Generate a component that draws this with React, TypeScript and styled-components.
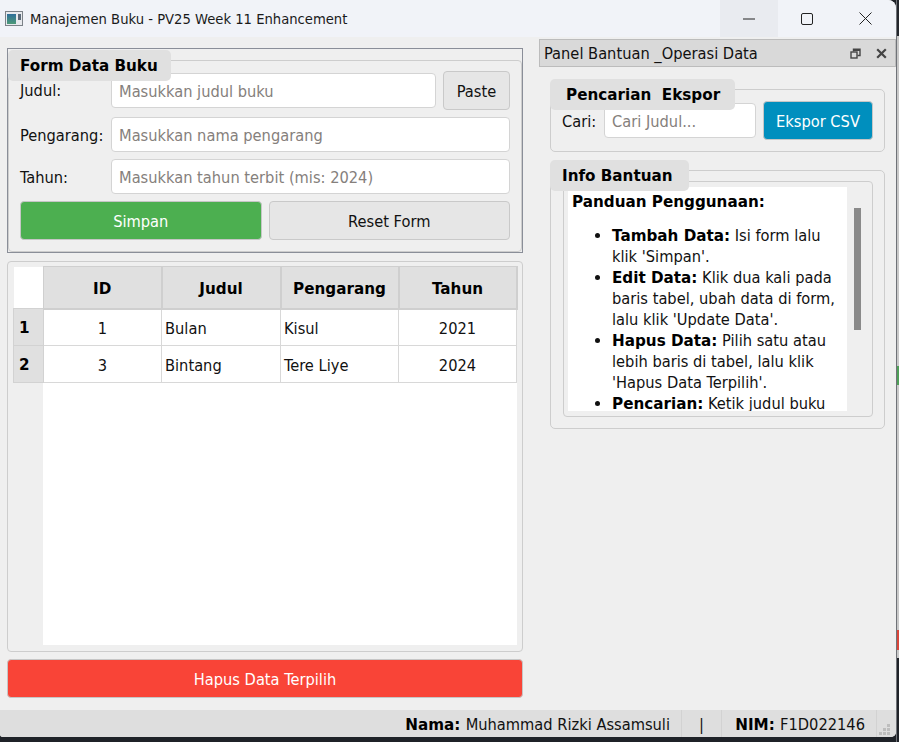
import styled, { createGlobalStyle } from "styled-components"

const GlobalStyle = createGlobalStyle`
  html, body {
    margin: 0;
    padding: 0;
    height: 100%;
    background: #1f2228;
    overflow: hidden;
  }
  * {
    box-sizing: border-box;
  }
  #root {
    height: 100%;
  }
`

const uiFont = `"DejaVu Sans Condensed", "DejaVu Sans", sans-serif`
const boldFont = `"DejaVu Sans", "Noto Sans", sans-serif`

const Desktop = styled.div`
  width: 899px;
  height: 742px;
  display: flex;
  font-family: ${uiFont};
  font-stretch: condensed;
  font-size: 16.3px;
  color: #111;
`

const Window = styled.div`
  width: 896px;
  height: 737px;
  flex: none;
  display: flex;
  flex-direction: column;
  background: #efefef;
  border-radius: 0 8px 5px 3px;
  overflow: hidden;
`

// the bit of the window behind this one that peeks out on the right
const BehindStrip = styled.div`
  width: 3px;
  flex: none;
  display: flex;
  flex-direction: column;
  border-left: 1px solid #6f7278;
`

const BehindPart = styled.div<{ $height: number; $color: string }>`
  height: ${(p) => p.$height}px;
  background: ${(p) => p.$color};
`

const TitleBar = styled.div`
  height: 37px;
  flex: none;
  display: flex;
  align-items: center;
  background: #f1f3f8;
  padding: 0 2px 0 5px;
`

const AppTitle = styled.span`
  margin-left: 7px;
  font-size: 14.65px;
  color: #1a1a1a;
  flex: 1;
`

const WinButton = styled.div<{ $hover?: boolean }>`
  width: 58px;
  height: 37px;
  display: flex;
  align-items: center;
  justify-content: center;
  background: ${(p) => (p.$hover ? "#e9ebf0" : "transparent")};
`

const Body = styled.div`
  flex: 1;
  display: flex;
  min-height: 0;
`

const LeftColumn = styled.div`
  width: 516px;
  margin-left: 7px;
  padding: 11px 0 12px;
  display: flex;
  flex-direction: column;
`

const FormFrame = styled.section`
  position: relative;
  height: 205px;
  border: 1px solid #8a8e98;
  padding-top: 11px;
  display: flex;
`

const FormGroup = styled.div`
  flex: 1;
  border: 1px solid #cdcdcd;
  border-radius: 4px;
  padding: 10px 11px 11px;
  display: grid;
  grid-template-columns: 91px 1fr;
  grid-template-rows: 39px 35px 35px 39px;
  row-gap: 7px;
  align-items: center;
`

const Legend = styled.div<{ $left: number; $top: number; $width: number; $pad: number }>`
  position: absolute;
  left: ${(p) => p.$left}px;
  top: ${(p) => p.$top}px;
  width: ${(p) => p.$width}px;
  height: 31px;
  padding: 6px 0 0 ${(p) => p.$pad}px;
  background: #e0e0e0;
  border-radius: 5px;
  font-family: ${boldFont};
  font-stretch: normal;
  font-weight: 700;
  font-size: 15.2px;
  line-height: 20px;
  color: #000;
  white-space: pre;
`

const FieldLabel = styled.label<{ $raise?: number }>`
  color: #111;
  margin-top: ${(p) => (p.$raise ? -p.$raise : 1)}px;
`

const TextField = styled.input`
  width: 100%;
  height: 35px;
  background: #fff;
  border: 1px solid #d4d4d4;
  border-radius: 4px;
  padding: 2px 7px 0;
  font-family: ${uiFont};
  font-stretch: condensed;
  font-size: 16.3px;
  outline: none;
  &::placeholder {
    color: #85807c;
    opacity: 1;
  }
`

const FirstRow = styled.div`
  display: flex;
  align-items: center;
  gap: 7px;
`

const ActionRow = styled.div`
  grid-column: 1 / 3;
  display: grid;
  grid-template-columns: 1fr 1fr;
  gap: 7px;
  height: 39px;
`

const Button = styled.button<{ $bg?: string; $fg?: string; $width?: number }>`
  height: 39px;
  width: ${(p) => (p.$width ? `${p.$width}px` : "100%")};
  flex: none;
  background: ${(p) => p.$bg ?? "#e6e6e6"};
  color: ${(p) => p.$fg ?? "#111"};
  border: 1px solid ${(p) => (p.$bg ? "#c6c6c6" : "#c9c9c9")};
  border-radius: 4px;
  font-family: ${uiFont};
  font-stretch: condensed;
  font-size: 16.3px;
  padding: 2px 0 0;
`

const TableGroup = styled.section`
  margin-top: 8px;
  height: 391px;
  border: 1px solid #cdcdcd;
  border-radius: 4px;
  padding: 4px 5px 6px;
  display: flex;
  flex-direction: column;
`

const TableBox = styled.div`
  flex: 1;
  display: grid;
  grid-template-columns: 30px 1fr;
  grid-template-rows: auto 1fr;
`

const DataTable = styled.table`
  grid-column: 1 / 3;
  width: 503px;
  table-layout: fixed;
  border-collapse: collapse;
  font-size: 16.3px;
`

const CornerCell = styled.th`
  width: 30px;
  height: 42px;
  background: #fff;
  padding: 0;
`

const HeadCell = styled.th<{ $width: number }>`
  width: ${(p) => p.$width}px;
  height: 42px;
  background: #e0e0e0;
  border: 1px solid #cfcfcf;
  border-width: 1px 2px 2px 1px;
  font-family: ${boldFont};
  font-stretch: normal;
  font-size: 15.2px;
  font-weight: 700;
  color: #000;
  padding: 4px 0 0;
`

const RowHead = styled.th`
  height: 37px;
  background: #e0e0e0;
  border: 1px solid #d2d2d2;
  text-align: left;
  padding: 2px 0 0 5px;
  font-family: ${boldFont};
  font-stretch: normal;
  font-size: 15.2px;
  font-weight: 700;
  color: #000;
`

const Cell = styled.td<{ $center?: boolean }>`
  height: 37px;
  background: #fff;
  border: 1px solid #d8d8d8;
  padding: 2px 3px 0;
  text-align: ${(p) => (p.$center ? "center" : "left")};
  color: #111;
`

const TableFiller = styled.div`
  grid-column: 2;
  width: 474px;
  background: #fff;
`

const DeleteButton = styled(Button)`
  margin-top: 7px;
  flex: none;
`

const Dock = styled.aside`
  margin: 2px 0 0 16px;
  width: 357px;
  display: flex;
  flex-direction: column;
`

const DockTitle = styled.div`
  height: 28px;
  flex: none;
  background: #d9d9d9;
  border: 1px solid #bcbcbc;
  display: flex;
  align-items: center;
  padding: 0 8px 0 4px;
`

const DockName = styled.span`
  flex: 1;
`

const DockIcon = styled.span`
  display: flex;
  margin-left: 15px;
`

const DockBody = styled.div`
  padding: 22px 11px 0;
  display: flex;
  flex-direction: column;
  gap: 18px;
`

const GroupBox = styled.section<{ $height: number }>`
  position: relative;
  height: ${(p) => p.$height}px;
  border: 1px solid #cdcdcd;
  border-radius: 5px;
`

const SearchRow = styled.div`
  display: flex;
  align-items: center;
  padding: 11px 11px 0;
`

const SearchLabel = styled.label`
  width: 42px;
  flex: none;
  margin-top: 1px;
`

const SearchField = styled(TextField)`
  width: 152px;
  flex: none;
  margin-right: 7px;
`

const HelpFrame = styled.div`
  margin: 10px 11px 0 12px;
  height: 236px;
  border: 1px solid #cdcdcd;
  border-radius: 4px;
  padding: 5px 0 5px 4px;
  display: flex;
`

const HelpText = styled.div`
  width: 279px;
  height: 100%;
  background: #fff;
  overflow: hidden;
  padding: 4px 0 0 4px;
  line-height: 21px;
  color: #111;
  b {
    font-family: ${boldFont};
    font-stretch: normal;
    font-weight: 700;
    font-size: 15.2px;
    line-height: 0;
    color: #000;
  }
  ul {
    margin: 13px 0 0;
    padding: 0 0 0 40px;
  }
  li {
    margin: 0;
  }
`

const ScrollThumb = styled.div`
  width: 7px;
  height: 122px;
  margin: 21px 0 0 7px;
  background: #8a8a8a;
`

const StatusBar = styled.footer`
  height: 27px;
  flex: none;
  background: #dedede;
  display: flex;
  align-items: center;
  justify-content: flex-end;
  color: #111;
  b {
    font-family: ${boldFont};
    font-stretch: normal;
    font-size: 15.2px;
    font-weight: 700;
    color: #000;
  }
`

const StatusItem = styled.div<{ $width: number; $center?: boolean }>`
  width: ${(p) => p.$width}px;
  height: 100%;
  display: flex;
  align-items: center;
  justify-content: ${(p) => (p.$center ? "center" : "flex-end")};
  border-right: 1px solid #d2d2d2;
  white-space: pre;
  padding: 2px ${(p) => (p.$center ? 0 : 11)}px 0 0;
`

const Grip = styled.div`
  width: 19px;
  height: 100%;
  display: flex;
  align-items: flex-end;
`

const AppIcon = () => (
  <svg width="18" height="15" viewBox="0 0 18 15">
    <defs>
      <linearGradient id="ai" x1="0" y1="0" x2="0" y2="1">
        <stop offset="0" stopColor="#2f6f9a" />
        <stop offset="1" stopColor="#4d9a78" />
      </linearGradient>
    </defs>
    <rect x="0.5" y="0.5" width="17" height="14" fill="#e8eaee" stroke="#7c8288" />
    <rect x="2" y="3" width="9" height="10" fill="url(#ai)" />
    <rect x="13" y="3" width="3" height="6" fill="#5c6a78" />
  </svg>
)

const FloatIcon = () => (
  <svg width="11" height="11" viewBox="0 0 11 11" fill="none" stroke="#444" strokeWidth="1.4">
    <rect x="1" y="4" width="6" height="6" />
    <path d="M3.5 3.5V1.2H10V7.5H7.5" />
    <path d="M3.5 2.2H10" />
  </svg>
)

const CloseIcon = () => (
  <svg width="11" height="11" viewBox="0 0 11 11" fill="none" stroke="#444" strokeWidth="2.2">
    <path d="M1.2 1.2L9.8 9.8M9.8 1.2L1.2 9.8" />
  </svg>
)

const GripIcon = () => (
  <svg width="14" height="14" viewBox="0 0 14 14" fill="#bdbdbd">
    <rect x="10" y="1" width="3" height="3" />
    <rect x="6" y="5" width="3" height="3" />
    <rect x="10" y="5" width="3" height="3" />
    <rect x="2" y="9" width="3" height="3" />
    <rect x="6" y="9" width="3" height="3" />
    <rect x="10" y="9" width="3" height="3" />
  </svg>
)

const books = [
  { no: 1, id: 1, title: "Bulan", author: "Kisul", year: 2021 },
  { no: 2, id: 3, title: "Bintang", author: "Tere Liye", year: 2024 },
]

const behindParts = [
  { height: 36, color: "#23262c" },
  { height: 330, color: "#c9c9c9" },
  { height: 19, color: "#4f9f58" },
  { height: 245, color: "#c9c9c9" },
  { height: 20, color: "#d9463a" },
  { height: 8, color: "#c9c9c9" },
]

export default function App() {
  return (
    <Desktop>
      <GlobalStyle />
      <Window>
        <TitleBar>
          <AppIcon />
          <AppTitle>Manajemen Buku - PV25 Week 11 Enhancement</AppTitle>
          <WinButton $hover>
            <svg width="12" height="2" viewBox="0 0 12 2">
              <path d="M0 1H12" stroke="#222" />
            </svg>
          </WinButton>
          <WinButton>
            <svg width="12" height="12" viewBox="0 0 12 12" fill="none">
              <rect x="0.5" y="0.5" width="11" height="11" rx="1.5" stroke="#222" />
            </svg>
          </WinButton>
          <WinButton>
            <svg width="13" height="13" viewBox="0 0 13 13" fill="none">
              <path d="M0.5 0.5L12.5 12.5M12.5 0.5L0.5 12.5" stroke="#222" />
            </svg>
          </WinButton>
        </TitleBar>
        <Body>
          <LeftColumn>
            <FormFrame>
              <Legend $left={0} $top={1} $width={163} $pad={12}>
                Form Data Buku
              </Legend>
              <FormGroup>
                <FieldLabel $raise={1}>Judul:</FieldLabel>
                <FirstRow>
                  <TextField placeholder="Masukkan judul buku" />
                  <Button $width={67}>Paste</Button>
                </FirstRow>
                <FieldLabel>Pengarang:</FieldLabel>
                <TextField placeholder="Masukkan nama pengarang" />
                <FieldLabel>Tahun:</FieldLabel>
                <TextField placeholder="Masukkan tahun terbit (mis: 2024)" />
                <ActionRow>
                  <Button $bg="#4caf50" $fg="#fff">
                    Simpan
                  </Button>
                  <Button>Reset Form</Button>
                </ActionRow>
              </FormGroup>
            </FormFrame>
            <TableGroup>
              <TableBox>
                <DataTable>
                  <thead>
                    <tr>
                      <CornerCell />
                      <HeadCell $width={118}>ID</HeadCell>
                      <HeadCell $width={119}>Judul</HeadCell>
                      <HeadCell $width={118}>Pengarang</HeadCell>
                      <HeadCell $width={118}>Tahun</HeadCell>
                    </tr>
                  </thead>
                  <tbody>
                    {books.map((book) => (
                      <tr key={book.no}>
                        <RowHead>{book.no}</RowHead>
                        <Cell $center>{book.id}</Cell>
                        <Cell>{book.title}</Cell>
                        <Cell>{book.author}</Cell>
                        <Cell $center>{book.year}</Cell>
                      </tr>
                    ))}
                  </tbody>
                </DataTable>
                <TableFiller />
              </TableBox>
            </TableGroup>
            <DeleteButton $bg="#f94437" $fg="#fff">
              Hapus Data Terpilih
            </DeleteButton>
          </LeftColumn>
          <Dock>
            <DockTitle>
              <DockName>Panel Bantuan _Operasi Data</DockName>
              <DockIcon>
                <FloatIcon />
              </DockIcon>
              <DockIcon>
                <CloseIcon />
              </DockIcon>
            </DockTitle>
            <DockBody>
              <GroupBox $height={63}>
                <Legend $left={-1} $top={-11} $width={185} $pad={16}>
                  {"Pencarian  Ekspor"}
                </Legend>
                <SearchRow>
                  <SearchLabel>Cari:</SearchLabel>
                  <SearchField placeholder="Cari Judul..." />
                  <Button $bg="#008fbe" $fg="#fff" $width={110}>
                    Ekspor CSV
                  </Button>
                </SearchRow>
              </GroupBox>
              <GroupBox $height={259}>
                <Legend $left={-1} $top={-11} $width={139} $pad={12}>
                  Info Bantuan
                </Legend>
                <HelpFrame>
                  <HelpText>
                    <b>Panduan Penggunaan:</b>
                    <ul>
                      <li>
                        <b>Tambah Data:</b> Isi form lalu klik 'Simpan'.
                      </li>
                      <li>
                        <b>Edit Data:</b> Klik dua kali pada baris tabel, ubah data di form, lalu klik 'Update Data'.
                      </li>
                      <li>
                        <b>Hapus Data:</b> Pilih satu atau lebih baris di tabel, lalu klik 'Hapus Data Terpilih'.
                      </li>
                      <li>
                        <b>Pencarian:</b> Ketik judul buku pada kolom cari.
                      </li>
                    </ul>
                  </HelpText>
                  <ScrollThumb />
                </HelpFrame>
              </GroupBox>
            </DockBody>
          </Dock>
        </Body>
        <StatusBar>
          <StatusItem $width={290}>
            <b>Nama: </b>Muhammad Rizki Assamsuli
          </StatusItem>
          <StatusItem $width={40} $center>
            |
          </StatusItem>
          <StatusItem $width={155}>
            <b>NIM: </b>F1D022146
          </StatusItem>
          <Grip>
            <GripIcon />
          </Grip>
        </StatusBar>
      </Window>
      <BehindStrip>
        {behindParts.map((part, i) => (
          <BehindPart key={i} $height={part.height} $color={part.color} />
        ))}
      </BehindStrip>
    </Desktop>
  )
}
